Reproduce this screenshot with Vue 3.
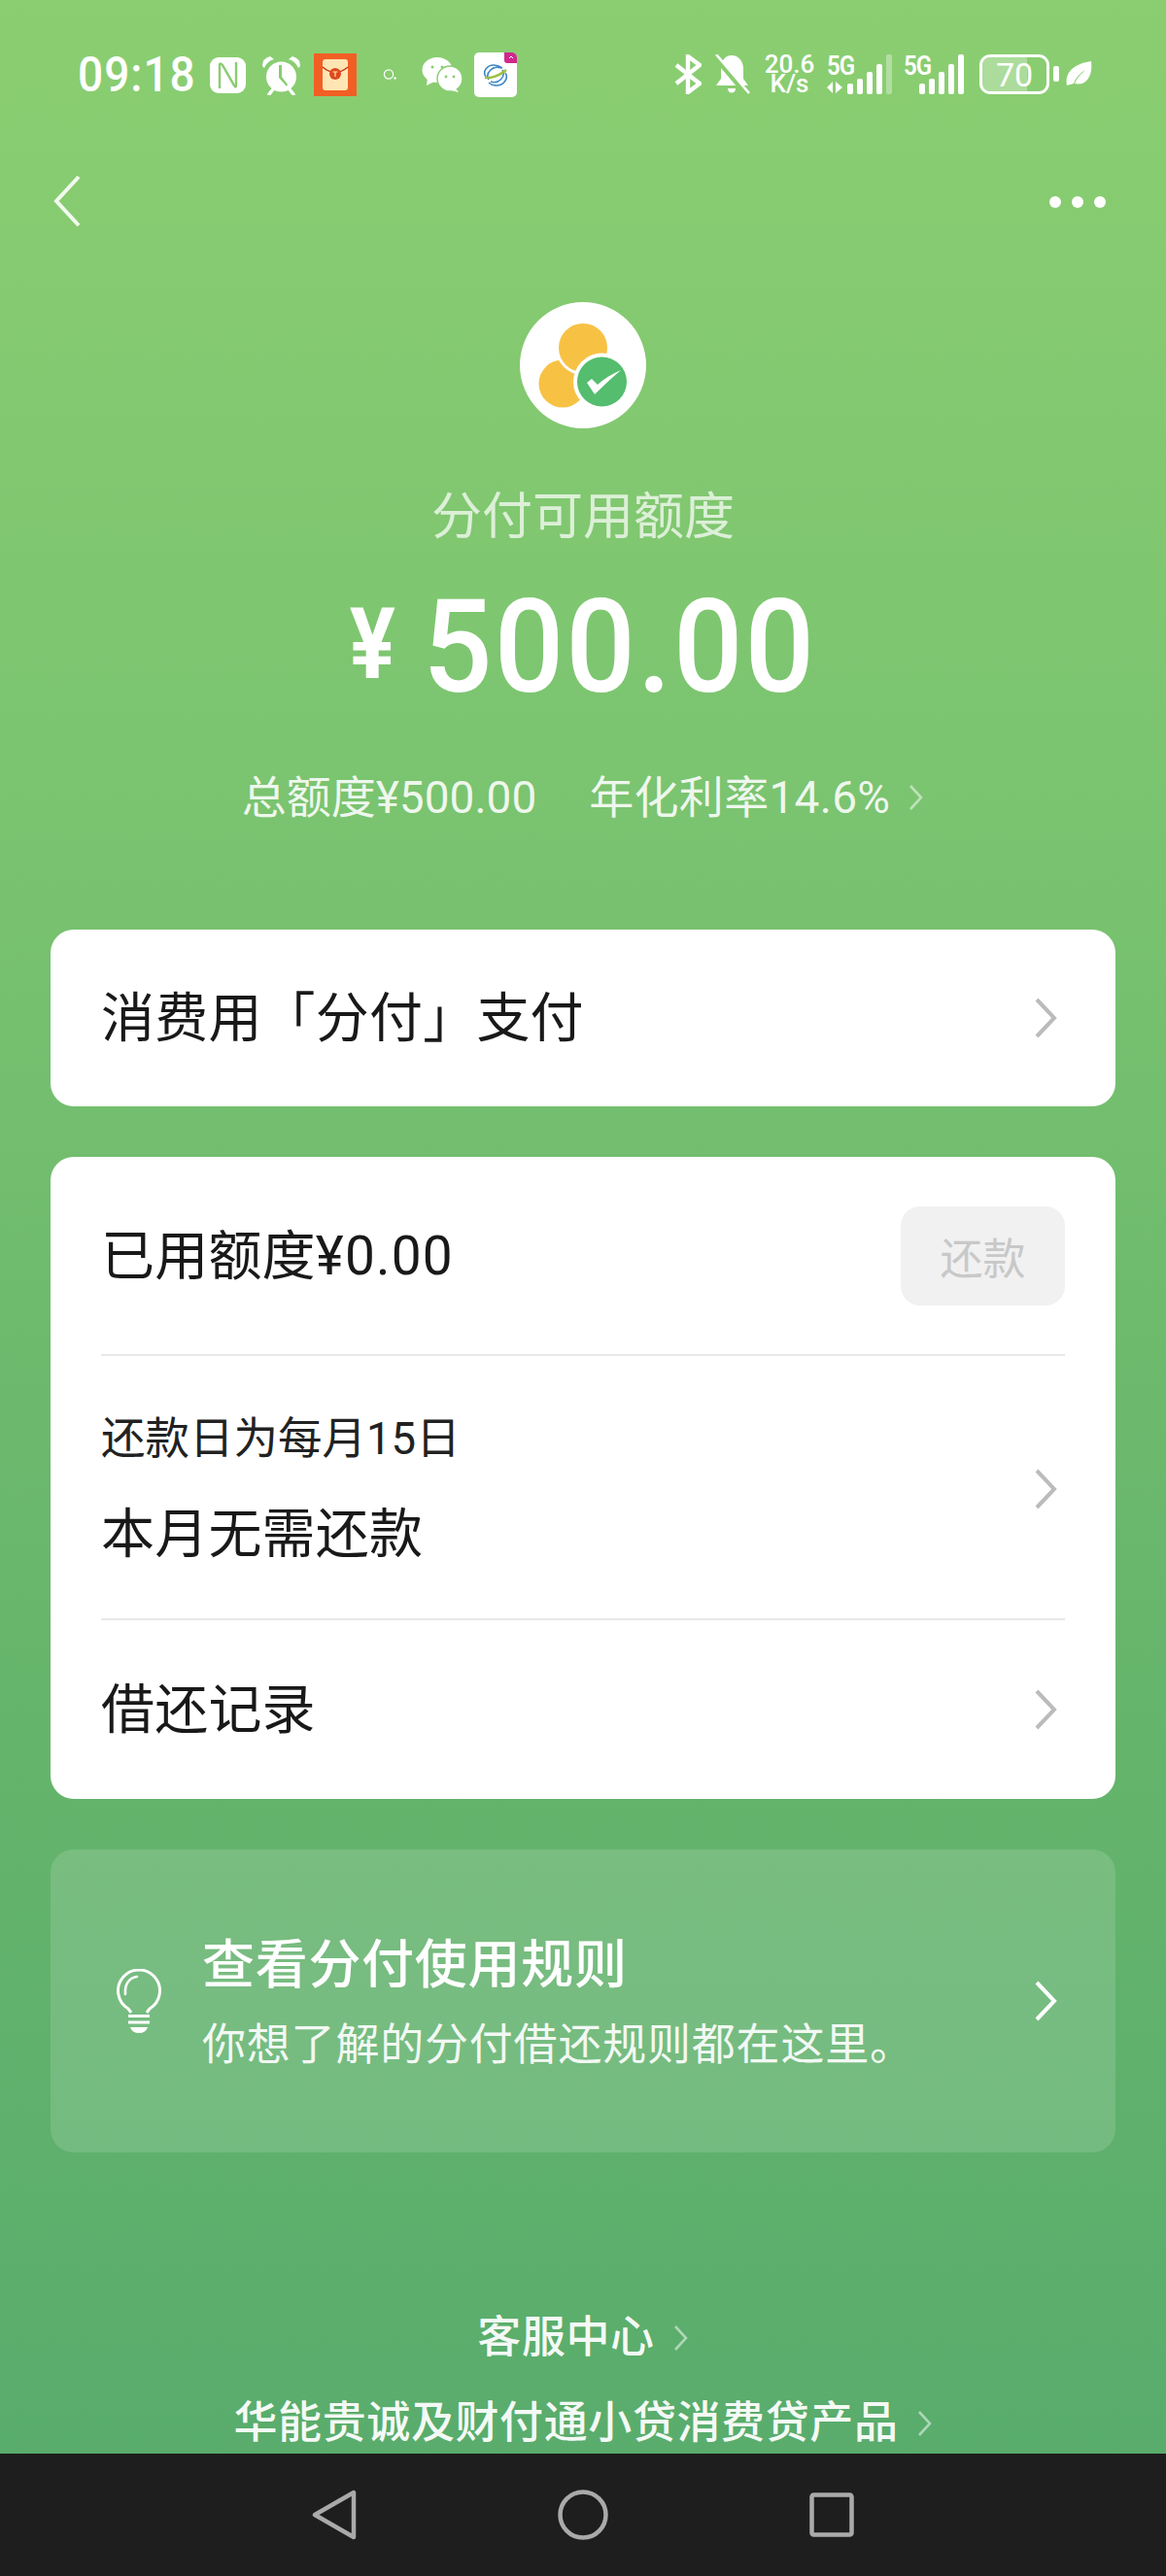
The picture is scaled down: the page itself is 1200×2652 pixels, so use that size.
<script setup>
const time = '09:18'
</script>

<template>
  <div class="page">
    <div class="status">
      <div class="status-left">
        <span class="time">{{ time }}</span>
        <svg class="ic nfc" viewBox="0 0 37 37"><rect width="37" height="37" rx="9" fill="#fff"/><path d="M10 32V8Q10 5 13 8L25 29Q27 32 27 29V5" fill="none" stroke="#8acc70" stroke-width="2.4"/></svg>
        <svg class="ic alarm" viewBox="0 0 41 41"><circle cx="20.5" cy="22" r="15.5" fill="#fff"/><path d="M1 11Q1 3 9 1L13 4Q6 6 3 13zM40 11Q40 3 32 1L28 4Q35 6 38 13z" fill="#fff"/><path d="M8 40l4-5M33 40l-4-5" stroke="#fff" stroke-width="3.5" stroke-linecap="round"/><path d="M18 10v13l8 9 1-2-6-8V10z" fill="#8acc70"/></svg>
        <svg class="ic packet" viewBox="0 0 44 44"><rect width="44" height="44" fill="#f25f24"/><rect x="9" y="6" width="26" height="32" rx="3" fill="#fde6b4"/><path d="M9 14q13 11 26 0" stroke="#c4391a" stroke-width="1.5" fill="none"/><circle cx="22" cy="21" r="6" fill="#e0481c"/><path d="M19.5 19h5M22 19v5" stroke="#fde6b4" stroke-width="1.2"/></svg>
        <svg class="ic tiny" viewBox="0 0 14 12"><circle cx="6" cy="5.5" r="4.6" fill="none" stroke="#fff" stroke-width="1.2"/><circle cx="12.5" cy="9.5" r="1.2" fill="#fff"/></svg>
        <svg class="ic wechat" viewBox="0 0 42 36"><ellipse cx="16" cy="13" rx="15.5" ry="13" fill="#fff"/><path d="M6 21l-1 8 8-4z" fill="#fff"/><circle cx="29" cy="22" r="13" fill="#fff" stroke="#8acc70" stroke-width="1.4"/><path d="M35 32l3 4-8-2z" fill="#fff"/><circle cx="11" cy="10" r="1.5" fill="#8acc70"/><circle cx="21" cy="10" r="1.5" fill="#8acc70"/><circle cx="25" cy="20" r="1.4" fill="#8acc70"/><circle cx="33" cy="20" r="1.4" fill="#8acc70"/></svg>
        <svg class="ic mobile" viewBox="0 0 44 46"><rect width="44" height="46" rx="5" fill="#fff"/><path d="M31 0h8a5 5 0 0 1 5 5v6h-10a3 3 0 0 1-3-3z" fill="#d0288c"/><path d="M36 6l2-2 2 2" stroke="#fff" stroke-width="1" fill="none"/><path d="M12 25c-4-6 2-12 8-12 3 0 6 1 9 3M15 28c-4-7 4-15 13-12M32 21c4 6-2 13-9 13-3 0-6-1-8-3M29 18c4 7-4 15-12 12" stroke="#3f88c5" stroke-width="1.6" fill="none"/><path d="M11 26Q22 27 33 18" stroke="#9cc13f" stroke-width="2.4" fill="none"/></svg>
      </div>
      <div class="status-right">
        <svg class="ic bt" viewBox="0 0 28 41"><path d="M2 11l24 19-12 9V2l12 9L2 30" fill="none" stroke="#fff" stroke-width="4.4"/></svg>
        <svg class="ic bell" viewBox="0 0 38 41"><path d="M19 1c7 0 12 6 12 14v10l5 7H3l5-7V15C8 7 12 1 19 1z" fill="#fff"/><path d="M15 35h8c0 6-8 6-8 0z" fill="#fff"/><path d="M1 1l33 39" stroke="#8acc70" stroke-width="6"/><path d="M3 0l34 40" stroke="#fff" stroke-width="2.6"/></svg>
        <div class="speed"><span>20.6</span><span>K/s</span></div>
        <div class="sig first">
          <span class="fiveg">5G</span>
          <svg class="arrows" viewBox="0 0 16 12"><path d="M0 6l6-6v12zM9 0l7 6-7 6z" fill="#fff"/></svg>
          <div class="bars">
            <i class="b1"></i><i class="b2"></i><i class="b3"></i><i class="b4"></i><i class="b5 faint"></i>
          </div>
        </div>
        <div class="sig second">
          <span class="fiveg">5G</span>
          <div class="bars">
            <i class="b1"></i><i class="b2"></i><i class="b3"></i><i class="b4"></i><i class="b5"></i>
          </div>
        </div>
        <div class="battery"><div class="fill"></div><span>70</span></div>
        <i class="nub"></i>
        <svg class="ic leaf" viewBox="0 0 27 28"><path d="M1 26C-2 11 11 3 26 1c2 15-5 26-17 23 3-7 7-10 11-14-5 3-10 8-12 14z" fill="#fff"/></svg>
      </div>
    </div>

    <div class="topbar">
      <svg class="back" viewBox="0 0 30 54"><path d="M27 2L4 27l23 25" fill="none" stroke="#f2faef" stroke-width="4"/></svg>
      <div class="dots"><i></i><i></i><i></i></div>
    </div>

    <div class="hero">
      <div class="logo">
        <svg viewBox="0 0 130 130"><circle cx="65" cy="65" r="65" fill="#fff"/><circle cx="44" cy="84" r="24.5" fill="#f7c244"/><circle cx="65" cy="47" r="26.5" fill="#f7c244" stroke="#fff" stroke-width="3"/><circle cx="84.5" cy="82" r="29.5" fill="#fff"/><circle cx="84.5" cy="82" r="25.5" fill="#54bd6e"/><path d="M69 83l5-4 6 6Q90 76 104 70 90 82 77 95z" fill="#fff"/></svg>
      </div>
      <div class="hero-label">分付可用额度</div>
      <div class="amount"><span class="yen">¥</span><span class="digits">500.00</span></div>
      <div class="meta">
        <span>总额度¥500.00</span>
        <span class="rate">年化利率14.6%</span>
        <svg class="chev-s" viewBox="0 0 17 28"><path d="M3 2l11 12L3 26" fill="none" stroke="#fff" stroke-opacity=".5" stroke-width="2.6"/></svg>
      </div>
    </div>

    <div class="card row-card">
      <span class="title">消费用「分付」支付</span>
      <svg class="chev" viewBox="0 0 24 42"><path d="M3 2l18 19L3 40" fill="none" stroke="#bbb" stroke-width="4"/></svg>
    </div>

    <div class="card stack">
      <div class="used">
        <span class="title">已用额度<span class="num">¥0.00</span></span>
        <div class="repay">还款</div>
      </div>
      <div class="due">
        <div>
          <div class="due-sub">还款日为每月15日</div>
          <div class="title">本月无需还款</div>
        </div>
        <svg class="chev" viewBox="0 0 24 42"><path d="M3 2l18 19L3 40" fill="none" stroke="#bbb" stroke-width="4"/></svg>
      </div>
      <div class="record">
        <span class="title">借还记录</span>
        <svg class="chev" viewBox="0 0 24 42"><path d="M3 2l18 19L3 40" fill="none" stroke="#bbb" stroke-width="4"/></svg>
      </div>
    </div>

    <div class="rules">
      <svg class="bulb" viewBox="0 0 46 66"><path d="M15 45L12 41A21.5 21.5 0 1 1 34 41L31 45" fill="none" stroke="#fff" stroke-width="3"/><path d="M9 26C8 16 13 9 21 8" fill="none" stroke="#fff" stroke-width="2.6" stroke-linecap="round"/><path d="M12 48.5h22M12 55h22" stroke="#fff" stroke-width="3"/><path d="M14 60h18q-2 6-9 6t-9-6z" fill="#fff"/></svg>
      <div class="rules-text">
        <div class="rules-title">查看分付使用规则</div>
        <div class="rules-sub">你想了解的分付借还规则都在这里。</div>
      </div>
      <svg class="chev" viewBox="0 0 24 42"><path d="M3 2l18 19L3 40" fill="none" stroke="#fff" stroke-width="4"/></svg>
    </div>

    <div class="links">
      <div class="link">客服中心<svg class="chev-s" viewBox="0 0 17 28"><path d="M3 2l11 12L3 26" fill="none" stroke="#fff" stroke-opacity=".5" stroke-width="2.6"/></svg></div>
      <div class="link">华能贵诚及财付通小贷消费贷产品<svg class="chev-s" viewBox="0 0 17 28"><path d="M3 2l11 12L3 26" fill="none" stroke="#fff" stroke-opacity=".5" stroke-width="2.6"/></svg></div>
    </div>

    <div class="navbar">
      <svg viewBox="0 0 46 52" class="nav-tri"><path d="M43 3v46L3 26z" fill="none" stroke="#aaa" stroke-width="4.5" stroke-linejoin="round"/></svg>
      <svg viewBox="0 0 52 52" class="nav-circle"><circle cx="26" cy="26" r="23.5" fill="none" stroke="#aaa" stroke-width="4.5"/></svg>
      <svg viewBox="0 0 46 46" class="nav-sq"><rect x="2.5" y="2.5" width="41" height="41" rx="2" fill="none" stroke="#aaa" stroke-width="4.5"/></svg>
    </div>
  </div>
</template>

<style>
html, body { margin: 0; padding: 0; }
</style>

<style scoped>
.page {
  width: 1200px;
  height: 2652px;
  position: relative;
  overflow: hidden;
  display: flex;
  flex-direction: column;
  background: linear-gradient(180deg, #8bce71 0%, #7bc470 30%, #66b56c 65%, #57ab6c 100%);
  font-family: Roboto, "Noto Sans CJK SC", "Noto Sans", sans-serif;
}
.ic { display: block; flex: none; }
.status {
  height: 150px;
  box-sizing: border-box;
  padding: 54px 76px 0 80px;
  display: flex;
  justify-content: space-between;
  align-items: flex-start;
  color: #fff;
}
.status-left { display: flex; align-items: center; height: 46px; }
.time { display: block; width: 136px; font-size: 46px; font-weight: 500; letter-spacing: 1px; line-height: 46px; transform: scaleY(1.08); }
.nfc { width: 37px; height: 37px; margin-right: 16px; }
.alarm { width: 41px; height: 41px; margin-right: 13px; }
.packet { width: 44px; height: 44px; margin-right: 27px; }
.tiny { width: 14px; height: 12px; margin-right: 26px; }
.wechat { width: 42px; height: 36px; margin-right: 12px; }
.mobile { width: 44px; height: 46px; }
.status-right { display: flex; align-items: flex-end; height: 41px; margin-top: 2px; }
.bt { width: 28px; height: 41px; margin-right: 12px; }
.bell { width: 38px; height: 41px; margin-right: 14px; }
.speed { display: flex; flex-direction: column; align-items: center; font-weight: 500; font-size: 26px; line-height: 21px; margin-right: 12px; width: 53px; height: 41px; }
.speed span { display: block; height: 20px; }
.sig { position: relative; height: 41px; }
.sig.first { width: 67px; margin-right: 12px; }
.sig.second { width: 62px; margin-right: 16px; }
.fiveg { position: absolute; left: 0; top: -1px; font-weight: 600; font-size: 24px; line-height: 22px; transform: scaleY(1.15); transform-origin: top left; letter-spacing: -1px; }
.arrows { position: absolute; left: 0; bottom: 1px; width: 16px; height: 12px; display: block; }
.bars { position: absolute; right: 0; bottom: 0; display: flex; gap: 4px; align-items: flex-end; }
.bars i { width: 6px; background: #fff; border-radius: 2px; display: block; }
.bars .b1 { height: 11px; }
.bars .b2 { height: 16px; }
.bars .b3 { height: 23px; }
.bars .b4 { height: 31px; }
.bars .b5 { height: 41px; }
.bars .faint { opacity: .35; }
.battery { position: relative; width: 72px; height: 41px; box-sizing: border-box; border: 3px solid #fff; border-radius: 11px; overflow: hidden; display: flex; align-items: center; justify-content: center; font-size: 34px; line-height: 34px; margin-right: 4px; }
.fill { position: absolute; left: 0; top: 0; bottom: 0; width: 70%; background: rgba(255,255,255,.3); }
.battery span { position: relative; }
.nub { display: block; width: 6px; height: 16px; background: #fff; border-radius: 2px; margin: 0 7px 13px 0; }
.leaf { width: 27px; height: 28px; margin-bottom: 7px; }

.topbar { height: 116px; box-sizing: border-box; display: flex; justify-content: space-between; align-items: flex-start; padding: 30px 62px 0 54px; }
.back { width: 30px; height: 54px; display: block; }
.dots { display: flex; gap: 11px; margin-top: 22px; }
.dots i { width: 12px; height: 12px; border-radius: 50%; background: #fff; display: block; }

.hero { display: flex; flex-direction: column; align-items: center; color: #fff; }
.logo { width: 130px; height: 130px; margin-top: 45px; }
.logo svg { width: 130px; height: 130px; display: block; }
.hero-label { margin-top: 60px; font-size: 52px; line-height: 64px; color: rgba(255,255,255,.72); }
.amount { margin-top: 26px; display: flex; align-items: flex-start; font-weight: 500; font-size: 126px; line-height: 150px; letter-spacing: 2px; }
.digits { display: block; transform: scaleY(1.06); }
.yen { display: block; font-size: 88px; font-weight: 700; line-height: 88px; margin-top: 22px; margin-right: 28px; letter-spacing: 0; transform: scaleY(1.15); transform-origin: top; }
.meta { margin-top: 50px; display: flex; align-items: center; font-size: 46px; line-height: 60px; color: rgba(255,255,255,.88); }
.rate { margin-left: 54px; letter-spacing: .3px; }
.chev-s { width: 17px; height: 28px; margin-left: 18px; display: block; }

.card { background: #fff; border-radius: 24px; margin: 0 52px; color: #1a1a1a; }
.title { font-size: 55px; line-height: 70px; color: #191919; letter-spacing: .2px; }
.num { letter-spacing: 1.2px; }
.row-card { margin-top: 106px; height: 182px; box-sizing: border-box; padding: 0 60px 0 52px; display: flex; align-items: center; justify-content: space-between; }
.chev { width: 24px; height: 42px; display: block; flex: none; }
.stack { margin-top: 52px; height: 661px; display: flex; flex-direction: column; padding: 0 52px; }
.used { height: 205px; flex: none; display: flex; align-items: center; justify-content: space-between; border-bottom: 2px solid #e8e8e8; box-sizing: border-box; }
.repay { width: 169px; height: 102px; border-radius: 20px; background: #f1f1f1; color: #c8c8c8; font-size: 44px; display: flex; align-items: center; justify-content: center; }
.due { height: 272px; flex: none; box-sizing: border-box; display: flex; align-items: center; justify-content: space-between; border-bottom: 2px solid #e8e8e8; padding: 4px 8px 0 0; }
.due-sub { font-size: 45.5px; line-height: 60px; margin-bottom: 32px; color: #222; }
.record { flex: 1; display: flex; align-items: center; justify-content: space-between; padding-right: 8px; }
.rules { margin: 52px 52px 0; height: 312px; box-sizing: border-box; border-radius: 24px; background: rgba(255,255,255,.14); display: flex; align-items: center; padding: 0 60px 0 68px; color: #fff; }
.bulb { width: 46px; height: 66px; display: block; flex: none; }
.rules-text { flex: 1; margin-left: 42px; padding-top: 4px; }
.rules-title { font-size: 54px; line-height: 74px; font-weight: 500; letter-spacing: .7px; }
.rules-sub { font-size: 45px; line-height: 62px; margin-top: 14px; color: rgba(255,255,255,.92); letter-spacing: .8px; }
.links { margin-top: 160px; display: flex; flex-direction: column; align-items: center; color: rgba(255,255,255,.94); gap: 26px; }
.link { display: flex; align-items: center; font-size: 45px; line-height: 62px; font-weight: 500; letter-spacing: .6px; }
.navbar { position: absolute; left: 0; right: 0; bottom: 0; height: 126px; background: #1e1e1e; display: flex; justify-content: center; align-items: center; gap: 207px; }
.nav-tri { width: 46px; height: 52px; display: block; }
.nav-circle { width: 52px; height: 52px; display: block; }
.nav-sq { width: 46px; height: 46px; display: block; }
</style>
